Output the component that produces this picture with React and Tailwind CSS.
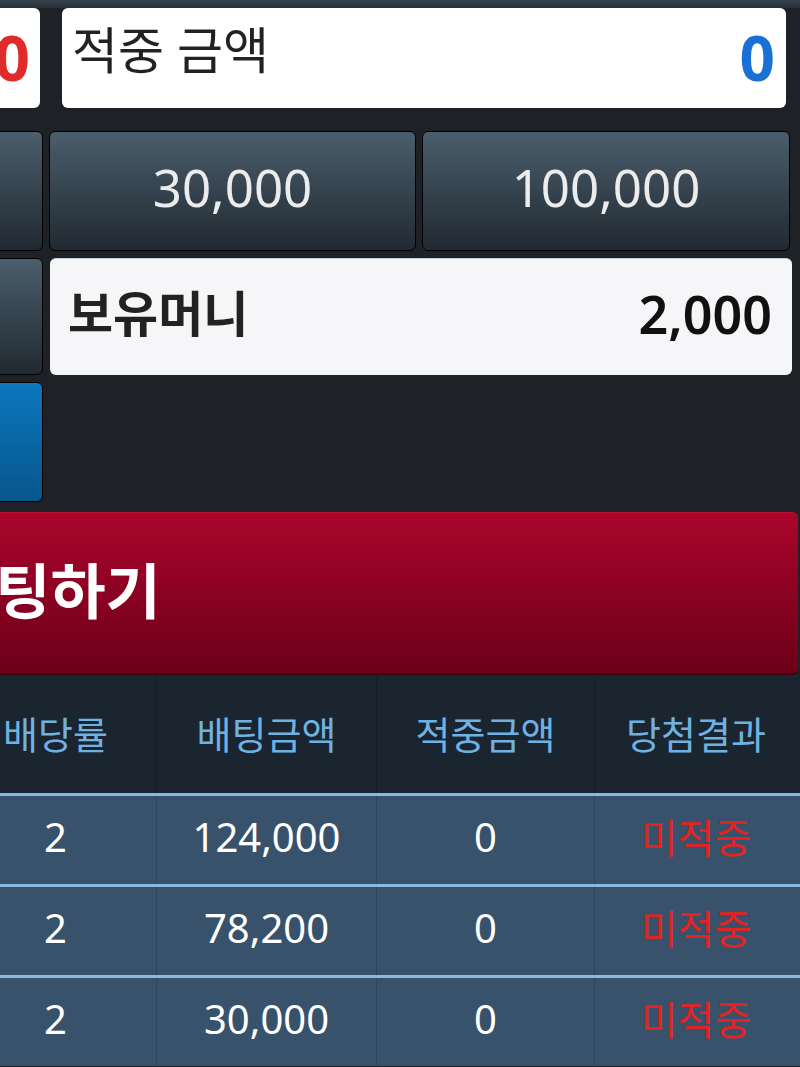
export default function App() {
  const rows = [
    { odds: "2", bet: "124,000", win: "0", result: "미적중" },
    { odds: "2", bet: "78,200", win: "0", result: "미적중" },
    { odds: "2", bet: "30,000", win: "0", result: "미적중" },
  ];
  const btn =
    "border border-black rounded-md bg-gradient-to-b from-[#4b5e6c] to-[#212a32] flex items-center justify-center text-[#ececec] text-[51px] leading-none";
  return (
    <div className="w-[800px] h-[1067px] overflow-hidden bg-[#1e2227] font-['Noto_Sans','Noto_Sans_CJK_KR',sans-serif]">
      <div className="h-[8px] bg-gradient-to-b from-[#35424d] to-[#262f37]" />
      {/* row 1 */}
      <div className="flex h-[100px]">
        <div className="w-[40px] shrink-0 bg-white rounded-r-md overflow-hidden flex items-start justify-end">
          <span className="mr-[10px] mt-[14px] text-[62px] leading-[70px] font-bold text-[#e12a2a]">0</span>
        </div>
        <div className="ml-[22px] w-[724px] shrink-0 bg-white rounded-md flex items-start justify-between px-[10px]">
          <span className="mt-[12px] text-[50px] leading-[60px] text-[#222]">적중 금액</span>
          <span className="mt-[14px] mr-[1px] text-[62px] leading-[70px] font-bold text-[#1b70d6]">0</span>
        </div>
      </div>
      {/* row 2 */}
      <div className="flex h-[120px] mt-[23px] gap-[6px] ml-[-10px]">
        <div className={`w-[53px] ${btn}`} />
        <div className={`w-[367px] ${btn}`}><span className="mb-[8px]">30,000</span></div>
        <div className={`w-[368px] ${btn}`}><span className="mb-[8px]">100,000</span></div>
      </div>
      {/* row 3 */}
      <div className="flex h-[117px] mt-[7px] ml-[-10px]">
        <div className={`w-[53px] ${btn}`} />
        <div className="ml-[7px] w-[742px] bg-[#f6f6f8] rounded-md border-t border-[#c8d0e0] flex items-center justify-between pl-[18px] pr-[20px]">
          <span className="text-[49px] leading-none font-bold text-[#222] mb-[8px]">보유머니</span>
          <span className="text-[52px] leading-none font-semibold text-[#111] mb-[6px]">2,000</span>
        </div>
      </div>
      {/* row 4 */}
      <div className="flex h-[120px] mt-[7px] ml-[-10px]">
        <div className="w-[53px] border border-black rounded-md bg-gradient-to-b from-[#0c78bd] to-[#07568b]" />
      </div>
      {/* bet button */}
      <div className="mt-[10px] h-[163px] w-[798px] rounded-r-md border-t border-[#c0102e] border-b-2 border-b-[#3a0010] bg-gradient-to-b from-[#aa052c] to-[#6d0019] flex items-center overflow-hidden">
        <span className="ml-[-60px] mb-[4px] text-[60px] leading-none font-bold text-white whitespace-nowrap">배팅하기</span>
      </div>
      {/* table */}
      <div className="mt-[1px]">
        <div className="flex h-[117px] bg-[#1b2530] text-[#6fb2e2] text-[38px]">
          <div className="w-[157px] border-r border-[#141c24] flex items-center justify-center pr-[45px]">배당률</div>
          <div className="w-[220px] border-r border-[#141c24] flex items-center justify-center">배팅금액</div>
          <div className="w-[218px] border-r border-[#141c24] flex items-center justify-center">적중금액</div>
          <div className="w-[205px] flex items-center justify-center pr-[3px]">당첨결과</div>
        </div>
        {rows.map((r, i) => (
          <div key={i} className="flex h-[91px] bg-[#37526a] border-t-[3px] border-[#8bb9dd] text-white text-[40px] leading-none">
            <div className="w-[157px] border-r border-[#2d465a] flex items-center justify-center pr-[45px]"><span className="mb-[6px]">{r.odds}</span></div>
            <div className="w-[220px] border-r border-[#2d465a] flex items-center justify-center"><span className="mb-[6px]">{r.bet}</span></div>
            <div className="w-[218px] border-r border-[#2d465a] flex items-center justify-center"><span className="mb-[6px]">{r.win}</span></div>
            <div className="w-[205px] flex items-center justify-center pr-[3px] text-[40px] text-[#e52222]"><span className="mb-[4px]">{r.result}</span></div>
          </div>
        ))}
      </div>
    </div>
  );
}
